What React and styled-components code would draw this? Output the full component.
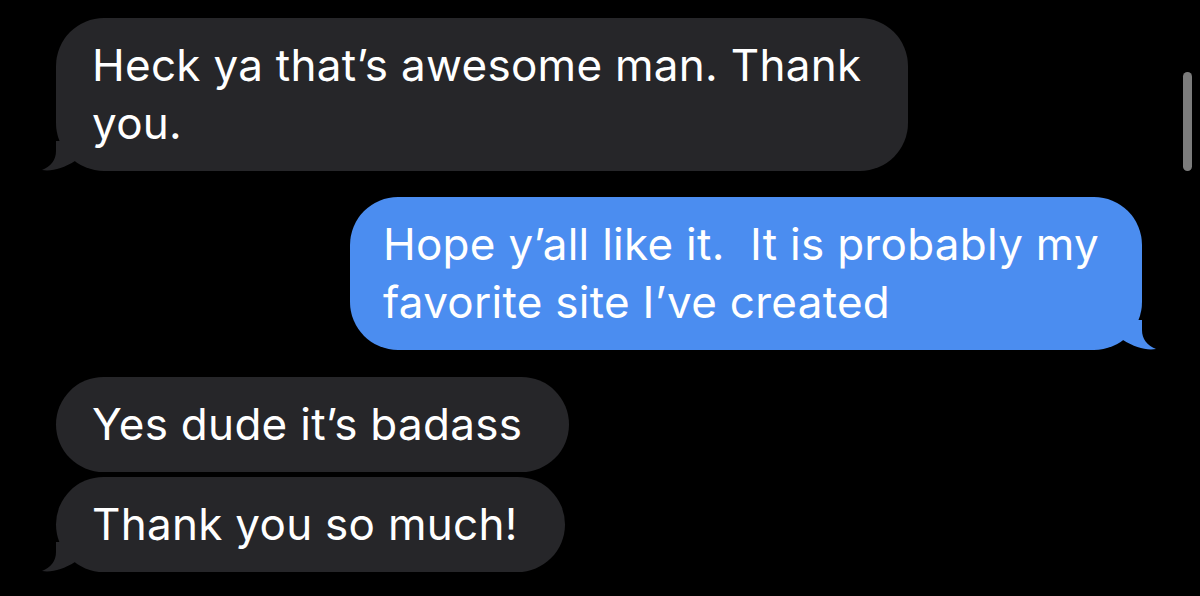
import React from "react";
import styled, { createGlobalStyle } from "styled-components";

const Global = createGlobalStyle`
  html, body { margin: 0; padding: 0; background: #000; }
  #root { min-height: 596px; }
`;

const Screen = styled.div`
  position: relative;
  width: 1200px;
  height: 596px;
  overflow: hidden;
  background: #000;
  font-family: Inter, "Noto Sans", sans-serif;
  -webkit-font-smoothing: antialiased;
`;

const Thread = styled.div`
  display: flex;
  flex-direction: column;
  padding: 18px 0 0 56px;
  width: 1086px;
`;

const Row = styled.div`
  display: flex;
  justify-content: ${(p) => (p.$mine ? "flex-end" : "flex-start")};
  margin-top: ${(p) => p.$gap || 0}px;
`;

const Bubble = styled.div`
  position: relative;
  box-sizing: border-box;
  width: fit-content;
  white-space: pre;
  font-size: 44px;
  line-height: 58px;
  letter-spacing: 0.28px;
  color: #fff;
  background: ${(p) => (p.$mine ? "#4b8df0" : "#262629")};
  border-radius: 48px;
  padding: 18px ${(p) => (p.$mine ? 43 : 47)}px 19px
    ${(p) => (p.$mine ? 33 : 36)}px;
`;

const Tail = styled.svg`
  position: absolute;
  bottom: 0;
  width: 54px;
  height: 30px;
  ${(p) =>
    p.$mine
      ? "right: -15px; transform: scaleX(-1);"
      : "left: -15px;"}
`;

const Scrollbar = styled.div`
  position: absolute;
  left: 1183px;
  top: 72px;
  width: 9px;
  height: 99px;
  border-radius: 5px;
  background: #7c7c7c;
`;

function BubbleTail({ mine, color }) {
  return (
    <Tail $mine={mine} viewBox="0 0 54 30">
      <path
        d="M15 0 L15 10 C15 19 10 25.5 1 29 C11 30.5 22 27.5 34 20 L34 0 Z"
        fill={color}
      />
    </Tail>
  );
}

function Message({ mine, tail, gap, children }) {
  const color = mine ? "#4b8df0" : "#262629";
  return (
    <Row $mine={mine} $gap={gap}>
      <Bubble $mine={mine}>
        {tail && <BubbleTail mine={mine} color={color} />}
        {children}
      </Bubble>
    </Row>
  );
}

export default function App() {
  return (
    <>
      <Global />
      <Screen>
        <Thread>
          <Message tail>{"Heck ya that\u2019s awesome man. Thank\nyou."}</Message>
          <Message mine tail gap={26}>
            {"Hope y\u2019all like it.  It is probably my\nfavorite site I\u2019ve created"}
          </Message>
          <Message gap={27}>{"Yes dude it\u2019s badass"}</Message>
          <Message tail gap={5}>{"Thank you so much!"}</Message>
        </Thread>
        <Scrollbar />
      </Screen>
    </>
  );
}
